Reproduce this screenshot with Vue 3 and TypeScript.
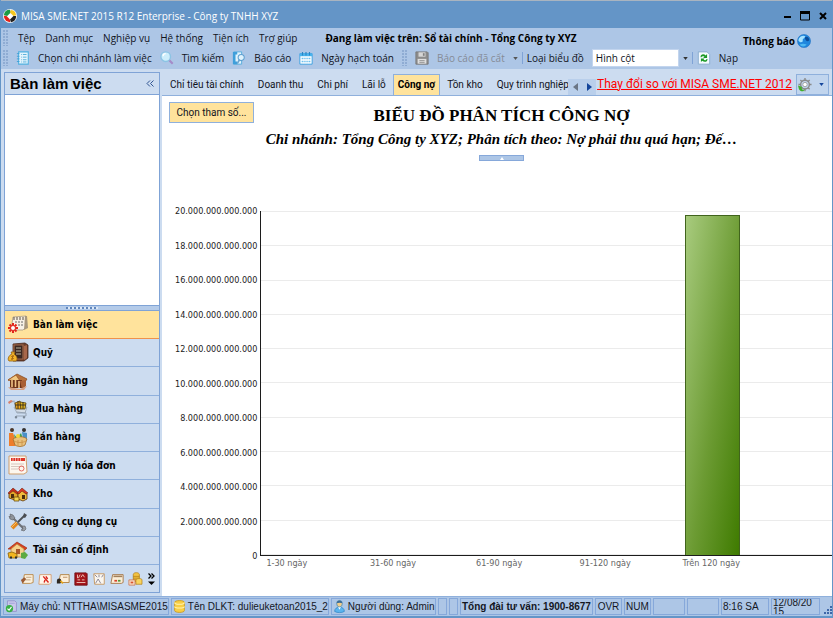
<script setup lang="ts">
import { ref } from 'vue'

interface Shape {
  d: string
  f?: string
  s?: string
  w?: number
}

const icons: Record<string, Shape[]> = {
  branch: [
    { d: 'M3 1h11v14H3z', f: '#e4f5fd', s: '#4fb0e0', w: 1.2 },
    { d: 'M1 3h3M1 6h3M1 9h3M1 12h3', s: '#3b9fd6', w: 1 },
    { d: 'M6 4h1M8 4h4M6 7h1M8 7h4M6 10h1M8 10h4M6 12.500h1M8 12.500h4', s: '#4aa8d8', w: 1 },
  ],
  search: [
    { d: 'M10 10l4.500 4.500', s: '#a58bc8', w: 2.5 },
    { d: 'M6.500 1a5.500 5.500 0 1 1 0 11a5.500 5.500 0 1 1 0-11z', f: '#cdeefb', s: '#8cc4e4', w: 1.6 },
    { d: 'M3.500 6a3 3 0 0 1 3-3', s: '#ffffff', w: 1.4 },
  ],
  report: [
    { d: 'M2 1h9v14H2z', f: '#e2f4fd', s: '#4fa9dc', w: 1 },
    { d: 'M1 1h5v3H4v8h2v3H1z', f: '#3f9fdb' },
    { d: 'M10.500 4a3.500 3.500 0 1 1 0 7a3.500 3.500 0 1 1 0-7z', f: '#dff2fc', s: '#5d9fd0', w: 1.2 },
    { d: 'M8.500 10L6 14.500', s: '#6aa3cf', w: 1.8 },
  ],
  calendar: [
    { d: 'M1 3h14v12H1z', f: '#ffffff', s: '#2f9be0', w: 1 },
    { d: 'M1 3h14v3H1z', f: '#49b4ee' },
    { d: 'M4 1v4M8 1v4M12 1v4', s: '#2b86c4', w: 1.3 },
    { d: 'M3 8.500h10M3 12h10', s: '#6cc0ef', w: 1.8 },
    { d: 'M5.500 7v7M8 7v7M10.500 7v7', s: '#ffffff', w: 0.8 },
  ],
  save: [
    { d: 'M1 1h13l1 1v13H1z', f: '#8c8c8c', s: '#777777', w: 1 },
    { d: 'M4 1.500h8v5H4z', f: '#d6d6d6' },
    { d: 'M9 2.500h2v3H9z', f: '#808080' },
    { d: 'M3 9h10v5.500H3z', f: '#dedede' },
    { d: 'M5 11h6M5 13h6', s: '#8f8f8f', w: 1 },
  ],
  reload: [
    { d: 'M1.500 1h10l3 3v11h-13z', f: '#f4faff', s: '#86aacb', w: 1 },
    { d: 'M4 7c0-4 4-4 6-2l1.500-1.500V8H7l1.500-1.500C7 5.500 5.500 6 5 7z', f: '#1c9a26' },
    { d: 'M12 9c0 4-4 4-6 2l-1.500 1.500V8.500h4L7.500 10c1.500 1 3 .5 3.500-1z', f: '#1c9a26' },
  ],
  globe: [
    { d: 'M8 0.500a7.500 7.500 0 1 1 0 15a7.500 7.500 0 1 1 0-15z', f: '#1f86dd', s: '#1a6ec0', w: 0.6 },
    { d: 'M1.500 7c1-5 6-6 8-4.500c-1 3-3 2.500-3 4.500c1 2-3 4-5 0z', f: '#a5e2ff' },
    { d: 'M3 12c3-1 5-1 8 0c-2 3-6 3-8 0z', f: '#4db8f2' },
    { d: 'M9 4c2-2 5 0 5 3c-2 3-5 0-5-3z', f: '#0b4d9a' },
  ],
  logo: [
    { d: 'M8 0a8 8 0 1 1 0 16a8 8 0 1 1 0-16z', f: '#f4f4f4' },
    { d: 'M8 1a7 7 0 0 0-7 6l4 1l4-4z', f: '#1b9b44' },
    { d: 'M9 1a7 7 0 0 1 6 6l-3 1l-4-4z', f: '#f6c71f' },
    { d: 'M15 8a7 7 0 0 1-6 7l-1-3l4-4z', f: '#202020' },
    { d: 'M1 8a7 7 0 0 0 7 7l0-3l-4-4z', f: '#e2231a' },
    { d: 'M8 5l3 3l-3 3l-3-3z', f: '#ffffff' },
  ],
  gear: [
    { d: 'M8 2.500a5 5 0 1 1 0 10a5 5 0 1 1 0-10z', s: '#8a8a8a', w: 1.6 },
    { d: 'M8 0v3M8 12v3M0.500 7.500h3M12.500 7.500h3M2.700 2.200l2 2M11.300 10.800l2 2M13.300 2.200l-2 2M4.700 10.800l-2 2', s: '#8a8a8a', w: 1.6 },
    { d: 'M8 5a2.500 2.500 0 1 1 0 5a2.500 2.500 0 1 1 0-5z', f: '#ffffff', s: '#9a9a9a', w: 1 },
    { d: 'M0 8.500l1 4c1 2 3 3 5 2.500l2-2c-2 1-4 0-4-2l1.500-.5z', f: '#3fae2a' },
  ],
  desk: [
    { d: 'M5 2l13-1v11l-3 3H3z', f: '#f7f1e6', s: '#a89a84', w: 0.8 },
    { d: 'M17 1l2 0l1 12l-4 2z', f: '#a8977c' },
    { d: 'M6 2v3M9 2v3M12 2v3M15 2v3', s: '#5b4e40', w: 1 },
    { d: 'M7 7h2M10 7h2M13 7h2M10 10h2M13 10h2', s: '#6a6a6a', w: 1 },
    { d: 'M5 8v10M0 13h10M1.500 9.500l7 7M8.500 9.500l-7 7', s: '#e2271c', w: 2 },
    { d: 'M5 10.500a2.500 2.500 0 1 1 0 5a2.500 2.500 0 1 1 0-5z', f: '#ffffff', s: '#e2271c', w: 1 },
  ],
  safe: [
    { d: 'M5 1l12-1l3 2v13l-4 3H5z', f: '#6b3f2c', s: '#4b2a1c', w: 0.8 },
    { d: 'M6 2h9v14H6z', f: '#3b2822', s: '#a2694a', w: 1.2 },
    { d: 'M8 5h5M8 8h5M8 11h5', s: '#b8b29c', w: 1.2 },
    { d: 'M16 3l3-1v13l-3 2z', f: '#a8674a' },
    { d: 'M3 9h4l-1 2c3 2 4 5 2 7H1c-2-2 0-6 3-7z', f: '#f3b52a', s: '#96620c', w: 0.8 },
    { d: 'M6 13H4c-1 1 2 2 1 3H3', s: '#8a4a08', w: 1 },
  ],
  bank: [
    { d: 'M0 8l9-6l10 5l-2 3z', f: '#b9733c', s: '#8b4d22', w: 0.8 },
    { d: 'M0 8l8-5l4 6z', f: '#f2c982', s: '#9c5b2a', w: 0.8 },
    { d: 'M2 8h12v8H2z', f: '#6d3319' },
    { d: 'M12 9l6-1v6l-4 3z', f: '#a85f35' },
    { d: 'M4 8v7M7.500 8v7M11 9v7', s: '#f0c286', w: 1.6 },
    { d: 'M0 15l12 2l7-3l-3 4H3z', f: '#d7a083' },
  ],
  cart: [
    { d: 'M1 3l5-2l3 11h9', s: '#a3b0c0', w: 1.2 },
    { d: 'M6 7h13l-2 6H9z', f: '#d5dde6', s: '#94a1b0', w: 0.8 },
    { d: 'M7 3l5-2l1 8H8z', f: '#f1a91d', s: '#54400c', w: 0.8 },
    { d: 'M12 2l6 1l-1 6h-4z', f: '#e9bb22', s: '#54400c', w: 0.8 },
    { d: 'M10 1v8M15 2v7M7 5h11', s: '#3f3520', w: 1 },
    { d: 'M9 12l9 1l0 3H8', s: '#97a4b4', w: 1 },
    { d: 'M8 16a1 1 0 1 1 0 2.500a1 1 0 1 1 0-2.500zM16 16a1 1 0 1 1 0 2.500a1 1 0 1 1 0-2.500z', f: '#7b8896' },
    { d: 'M0 2l3-2l2 1l-4 3z', f: '#d9806b' },
  ],
  sale: [
    { d: 'M1 5l4 0l3 8l-1 5H1z', f: '#ee7d2b' },
    { d: 'M4 0a2 2 0 1 1 0 4a2 2 0 1 1 0-4z', f: '#4b3628' },
    { d: 'M14 4l5 1v7l-4-1z', f: '#4a90c8' },
    { d: 'M16 0a2 2 0 1 1 0 4a2 2 0 1 1 0-4z', f: '#35302f' },
    { d: 'M6 6l3 4l4-5l2 6H7z', f: '#3fa04b' },
    { d: 'M5 11c4-3 11-3 14 0l-2 6c-3 2-7 2-10 0z', f: '#e8c07c', s: '#a5702b', w: 0.8 },
    { d: 'M6 13c4 2 8 2 12 0M10 12v6M14 12v6', s: '#c58a3f', w: 0.7 },
    { d: 'M10 6a2 2 0 1 1 0 4a2 2 0 1 1 0-4z', f: '#f4d837' },
  ],
  invoice: [
    { d: 'M1 0h17l1 16l-3 2H1z', f: '#fdf7ee', s: '#cf9f6f', w: 1 },
    { d: 'M3 3.500h14', s: '#df3326', w: 3 },
    { d: 'M5 2v3M7.500 2v3M10 2v3M12.500 2v3', s: '#fdf7ee', w: 0.6 },
    { d: 'M3 8h13M3 10.500h13M3 13h7', s: '#cbb9b3', w: 0.8 },
    { d: 'M13.500 10a2.500 2.500 0 1 1 0 5a2.500 2.500 0 1 1 0-5z', s: '#e4685f', w: 1 },
  ],
  stock: [
    { d: 'M1 9l4-4l5 4v6l-3 1l-6-2z', f: '#e1a72a', s: '#5e360a', w: 0.8 },
    { d: 'M0 9l5-5l6 5l-2 1l-4-3l-4 3z', f: '#c8301c', s: '#5e1a0a', w: 0.5 },
    { d: 'M10 10l4-4l5 4v5l-4 2l-5-2z', f: '#f0bd3c', s: '#5e360a', w: 0.8 },
    { d: 'M9 9l5-5l6 5l-2 1l-4-3l-3 3z', f: '#d83a24', s: '#5e1a0a', w: 0.5 },
    { d: 'M3 10h3v4H3zM14 11h3v4h-3z', f: '#4d2f0e' },
    { d: 'M6 13h5v4H6z', f: '#f6d750', s: '#6c4a0c', w: 0.8 },
  ],
  tools: [
    { d: 'M4 4l12 12', s: '#70747a', w: 2.2 },
    { d: 'M2 1l3 1l2 3l-2 2l-3-1l-1-3l2 1z', f: '#90959c', s: '#5a5d62', w: 0.6 },
    { d: 'M14 13l3 0l1 3l-2 2l-3-1l2-1z', f: '#9aa0a8', s: '#5a5d62', w: 0.6 },
    { d: 'M17 2L10 9', s: '#4d5055', w: 1.8 },
    { d: 'M16 0l3 2l-2 3l-2-1z', f: '#4a4d52' },
    { d: 'M9 10l-5 5', s: '#e2871e', w: 4 },
    { d: 'M9 9l-5 5', s: '#f6bd62', w: 1 },
  ],
  asset: [
    { d: 'M0 8l9-7l10 6l-2 2z', f: '#d9401f', s: '#97260c', w: 0.6 },
    { d: 'M3 8l6-5l7 5v8H3z', f: '#f6d28c', s: '#b78943', w: 0.8 },
    { d: 'M8 8h4v5H8z', f: '#a9572a' },
    { d: 'M0 12l4-1l5 2v4H1z', f: '#f3b61e', s: '#8c6209', w: 0.8 },
    { d: 'M2 16.500h2M7 16.500h2', s: '#2c2c2c', w: 2 },
    { d: 'M13 12l4-1l3 3l-3 4l-4-1z', f: '#5daa42' },
  ],
  mini1: [
    { d: 'M5 3h10v9l-3 1H3z', f: '#fbf1de', s: '#b8833f', w: 1 },
    { d: 'M7 6h6M6 9h6', s: '#bd9c77', w: 1 },
    { d: 'M1 9l4-3l2 2l-4 5z', f: '#9c5b33' },
  ],
  mini2: [
    { d: 'M2 3h13v9l-2 2H1z', f: '#fff6ea', s: '#d29a6b', w: 1 },
    { d: 'M6 5l6 7M9 5l2 3M8 9l-1 3', s: '#d9231b', w: 1.6 },
  ],
  mini3: [
    { d: 'M5 3h10v9H3z', f: '#fdefd9', s: '#b07e3a', w: 1 },
    { d: 'M1 10a2 2 0 1 1 5 0l-1 3H1z', f: '#2c2722' },
    { d: 'M5 10l3 3', s: '#e6a519', w: 2 },
    { d: 'M8 6h5', s: '#b7875a', w: 1 },
  ],
  mini4: [
    { d: 'M1 1h13l1 1v13H1z', f: '#a5161b', s: '#6f0c10', w: 1 },
    { d: 'M4 3v4M7 3l-2 4M8 6l2-3l2 3M4 9h3M9 9h3M3 12h10', s: '#f1cfc4', w: 1 },
  ],
  mini5: [
    { d: 'M2 2h12v12H3z', f: '#faf6ef', s: '#c5955b', w: 1 },
    { d: 'M3 3l3 3M8 3v3M13 3l-2 3M4 13l3-5l3 5', s: '#807c8e', w: 1 },
  ],
  mini6: [
    { d: 'M3 3h12v9l-2 1H1z', f: '#fbeed8', s: '#a27242', w: 1 },
    { d: 'M4 5h10', s: '#a2805c', w: 1.8 },
    { d: 'M5 10h3', s: '#d8402c', w: 2 },
    { d: 'M9 10h3', s: '#54953c', w: 2 },
  ],
  mini7: [
    { d: 'M6 3c0-3 7-3 7 0v8H6z', f: '#f3c342', s: '#b27c11', w: 0.8 },
    { d: 'M6 5h7M6 7h7M6 9h7', s: '#b27c11', w: 0.8 },
    { d: 'M9 9c1-2 7-2 7 0v5H9z', f: '#f8d45f', s: '#b27c11', w: 0.8 },
    { d: 'M1 9h7v6H1z', f: '#f7dcc6', s: '#c76a45', w: 0.8 },
    { d: 'M3 11h3v2H3z', f: '#d9542f' },
  ],
  server: [
    { d: 'M3 1h9l2 2v11H3z', f: '#c9c8ea', s: '#8e8bc8', w: 1 },
    { d: 'M5 4h7', s: '#9d99d6', w: 1 },
    { d: 'M5.500 6a4.500 4.500 0 1 1 0 9a4.500 4.500 0 1 1 0-9z', f: '#38b045' },
    { d: 'M3 10.500l2 2l3-4', s: '#ffffff', w: 1.3 },
  ],
  database: [
    { d: 'M2 3c0-3 12-3 12 0v10c0 3-12 3-12 0z', f: '#f8cf45', s: '#c9971a', w: 1 },
    { d: 'M2 3c0 3 12 3 12 0M2 8c0 2.500 12 2.500 12 0', s: '#fff3b0', w: 1.4 },
  ],
  user: [
    { d: 'M2 14c0-7 12-7 12 0c-3 2-9 2-12 0z', f: '#5bb4ee', s: '#2b7fbf', w: 0.8 },
    { d: 'M6 8l2 4l2-4z', f: '#ffffff' },
    { d: 'M8 0.500a3.500 4 0 1 1 0 8a3.500 4 0 1 1 0-8z', f: '#f3cd8a', s: '#2f83c0', w: 0.8 },
    { d: 'M4.500 4c0-4.500 7-4.500 7 0c-2-1-5-1-7 0z', f: '#3a6b98' },
  ],
}

const menus = ['Tệp', 'Danh mục', 'Nghiệp vụ', 'Hệ thống', 'Tiện ích', 'Trợ giúp']

const tools = [
  { icon: 'branch', label: 'Chọn chi nhánh làm việc' },
  { icon: 'search', label: 'Tìm kiếm' },
  { icon: 'report', label: 'Báo cáo' },
  { icon: 'calendar', label: 'Ngày hạch toán' },
]

const tabs = ['Chỉ tiêu tài chính', 'Doanh thu', 'Chi phí', 'Lãi lỗ', 'Công nợ', 'Tồn kho', 'Quy trình nghiệp vụ']
const activeTab = ref('Công nợ')

const modules = [
  { icon: 'desk', label: 'Bàn làm việc' },
  { icon: 'safe', label: 'Quỹ' },
  { icon: 'bank', label: 'Ngân hàng' },
  { icon: 'cart', label: 'Mua hàng' },
  { icon: 'sale', label: 'Bán hàng' },
  { icon: 'invoice', label: 'Quản lý hóa đơn' },
  { icon: 'stock', label: 'Kho' },
  { icon: 'tools', label: 'Công cụ dụng cụ' },
  { icon: 'asset', label: 'Tài sản cố định' },
]
const activeModule = ref('Bàn làm việc')
const shortcuts = ['mini1', 'mini2', 'mini3', 'mini4', 'mini5', 'mini6', 'mini7']

const chartType = ref('Hình cột')

const axisMax = 20
const ticks = Array.from({ length: 11 }, (_, i) => {
  const value = axisMax - i * 2
  return value === 0 ? '0' : `${value}.000.000.000.000`
})
const series = [
  { label: '1-30 ngày', value: 0 },
  { label: '31-60 ngày', value: 0 },
  { label: '61-90 ngày', value: 0 },
  { label: '91-120 ngày', value: 0 },
  { label: 'Trên 120 ngày', value: 19.75 },
]
</script>

<template>
  <div class="window">
    <header class="titlebar">
      <svg class="ic small" viewBox="0 0 16 16"><path v-for="(p, i) in icons.logo" :key="i" :d="p.d" :fill="p.f || 'none'" :stroke="p.s" :stroke-width="p.w" /></svg>
      <span class="caption">MISA SME.NET 2015 R12 Enterprise - Công ty TNHH XYZ</span>
      <div class="winbtns">
        <button aria-label="Thu nhỏ"><svg viewBox="0 0 10 10"><path d="M2 5h7v2H2z" fill="#000" /></svg></button>
        <button aria-label="Phóng to"><svg viewBox="0 0 10 10"><path d="M.5 1v8h9V1z" fill="none" stroke="#000" /><path d="M0 0h10v3H0z" fill="#000" /></svg></button>
        <button aria-label="Đóng"><svg viewBox="0 0 10 10"><path d="M2 2l6 6M8 2l-6 6" stroke="#000" stroke-width="2" /></svg></button>
      </div>
    </header>

    <div class="bars">
      <div class="rows">
        <nav class="row menu">
          <i class="grip"></i>
          <button v-for="m in menus" :key="m">{{ m }}</button>
          <strong class="working">Đang làm việc trên: Sổ tài chính - Tổng Công ty XYZ</strong>
        </nav>
        <div class="row tools">
          <i class="grip"></i>
          <button v-for="t in tools" :key="t.icon" class="tool">
            <svg class="ic small" viewBox="0 0 16 16"><path v-for="(p, i) in icons[t.icon]" :key="i" :d="p.d" :fill="p.f || 'none'" :stroke="p.s" :stroke-width="p.w" /></svg>
            <span>{{ t.label }}</span>
          </button>
          <i class="grip"></i>
          <button class="tool muted" disabled>
            <svg class="ic small" viewBox="0 0 16 16"><path v-for="(p, i) in icons.save" :key="i" :d="p.d" :fill="p.f || 'none'" :stroke="p.s" :stroke-width="p.w" /></svg>
            <span>Báo cáo đã cất</span>
            <svg class="caret" viewBox="0 0 6 4"><path d="M0 0h6L3 4z" fill="#555" /></svg>
          </button>
          <i class="sep"></i>
          <label for="chart-type">Loại biểu đồ</label>
          <div class="combo">
            <select id="chart-type" v-model="chartType">
              <option>Hình cột</option>
              <option>Hình tròn</option>
            </select>
            <svg class="caret" viewBox="0 0 6 4"><path d="M0 0h6L3 4z" fill="#333" /></svg>
          </div>
          <i class="sep"></i>
          <button class="tool">
            <svg class="ic small" viewBox="0 0 16 16"><path v-for="(p, i) in icons.reload" :key="i" :d="p.d" :fill="p.f || 'none'" :stroke="p.s" :stroke-width="p.w" /></svg>
            <span>Nạp</span>
          </button>
        </div>
      </div>
      <button class="notice">
        <span>Thông báo</span>
        <svg class="ic small" viewBox="0 0 16 16"><path v-for="(p, i) in icons.globe" :key="i" :d="p.d" :fill="p.f || 'none'" :stroke="p.s" :stroke-width="p.w" /></svg>
      </button>
    </div>

    <div class="body">
      <aside class="side">
        <div class="sidehead">
          <h2>Bàn làm việc</h2>
          <button aria-label="Thu gọn"><svg viewBox="0 0 8 7"><path d="M4 .5L1 3.500l3 3M7.500 .5l-3 3l3 3" fill="none" stroke="#2f5390" /></svg></button>
        </div>
        <div class="sidepane"></div>
        <div class="splitter"><i></i></div>
        <nav class="modules">
          <button v-for="m in modules" :key="m.icon" class="module" :class="{ on: m.label === activeModule }" @click="activeModule = m.label">
            <svg class="ic big" viewBox="0 0 20 19"><path v-for="(p, i) in icons[m.icon]" :key="i" :d="p.d" :fill="p.f || 'none'" :stroke="p.s" :stroke-width="p.w" /></svg>
            <span>{{ m.label }}</span>
          </button>
        </nav>
        <div class="shortcuts">
          <button v-for="s in shortcuts" :key="s" :aria-label="s">
            <svg class="ic small" viewBox="0 0 16 16"><path v-for="(p, i) in icons[s]" :key="i" :d="p.d" :fill="p.f || 'none'" :stroke="p.s" :stroke-width="p.w" /></svg>
          </button>
          <button class="more" aria-label="Thêm">
            <svg viewBox="0 0 7 12"><path d="M.5 .5L3 3L.5 5.500M3.500 .5L6 3L3.500 5.500" fill="none" stroke="#000" stroke-width="1.300" /><path d="M0 8.500h7L3.500 12z" fill="#000" /></svg>
          </button>
        </div>
      </aside>

      <main class="main">
        <div class="tabs">
          <div class="tablist">
            <button v-for="t in tabs" :key="t" class="tab" :class="{ on: t === activeTab }" @click="activeTab = t">{{ t }}</button>
          </div>
          <div class="scroll">
            <button aria-label="Trước"><svg viewBox="0 0 5 8"><path d="M5 0v8L0 4z" fill="#6b7686" /></svg></button>
            <button aria-label="Sau"><svg viewBox="0 0 5 8"><path d="M0 0v8l5-4z" fill="#14459b" /></svg></button>
          </div>
          <a href="#" class="changes">Thay đổi so với MISA SME.NET 2012</a>
          <button class="settings" aria-label="Tùy chọn">
            <svg class="ic small" viewBox="0 0 16 16"><path v-for="(p, i) in icons.gear" :key="i" :d="p.d" :fill="p.f || 'none'" :stroke="p.s" :stroke-width="p.w" /></svg>
            <svg class="caret" viewBox="0 0 6 4"><path d="M0 0h6L3 4z" fill="#14459b" /></svg>
          </button>
        </div>

        <section class="report">
          <div class="heading">
            <button class="param">Chọn tham số...</button>
            <div class="titles">
              <h1>BIỂU ĐỒ PHÂN TÍCH CÔNG NỢ</h1>
              <p>Chi nhánh: Tổng Công ty XYZ; Phân tích theo: Nợ phải thu quá hạn; Đế…</p>
              <button class="fold" aria-label="Thu gọn tiêu đề"><svg viewBox="0 0 4 3"><path d="M0 3h4L2 0z" fill="#fff" /></svg></button>
            </div>
          </div>
          <div class="chart">
            <div class="yaxis"><span v-for="t in ticks" :key="t">{{ t }}</span></div>
            <div class="plot">
              <div class="grid"><i v-for="t in ticks" :key="t"></i></div>
              <div class="slots">
                <div v-for="s in series" :key="s.label" class="slot">
                  <div v-if="s.value" class="bar" :style="{ height: (s.value / axisMax) * 100 + '%' }"></div>
                </div>
              </div>
            </div>
            <div class="xaxis"><div v-for="s in series" :key="s.label"><span>{{ s.label }}</span></div></div>
          </div>
        </section>
      </main>
    </div>

    <footer class="status">
      <div class="cell host">
        <svg class="ic tinyic" viewBox="0 0 16 16"><path v-for="(p, i) in icons.server" :key="i" :d="p.d" :fill="p.f || 'none'" :stroke="p.s" :stroke-width="p.w" /></svg>
        <span>Máy chủ: NTTHA\MISASME2015</span>
      </div>
      <div class="cell db">
        <svg class="ic tinyic" viewBox="0 0 16 16"><path v-for="(p, i) in icons.database" :key="i" :d="p.d" :fill="p.f || 'none'" :stroke="p.s" :stroke-width="p.w" /></svg>
        <span>Tên DLKT: dulieuketoan2015_2</span>
      </div>
      <div class="cell who">
        <svg class="ic tinyic" viewBox="0 0 16 16"><path v-for="(p, i) in icons.user" :key="i" :d="p.d" :fill="p.f || 'none'" :stroke="p.s" :stroke-width="p.w" /></svg>
        <span>Người dùng: Admin</span>
      </div>
      <div class="cell tiny"></div>
      <div class="cell tiny"></div>
      <div class="cell hotline">Tổng đài tư vấn: 1900-8677</div>
      <div class="cell key">OVR</div>
      <div class="cell key">NUM</div>
      <div class="cell blank"></div>
      <div class="cell blank"></div>
      <div class="cell time">8:16 SA</div>
      <div class="cell date">12/08/20<br />15</div>
      <svg class="resize" viewBox="0 0 10 10"><path d="M8 1h2v2H8zM5 4h2v2H5zM8 4h2v2H8zM2 7h2v2H2zM5 7h2v2H5zM8 7h2v2H8z" fill="#3f67a8" /></svg>
    </footer>
  </div>
</template>

<style>
body {
  margin: 0;
}
</style>

<style scoped>
* {
  box-sizing: border-box;
}
button {
  appearance: none;
  border: 0;
  padding: 0;
  background: none;
  color: inherit;
  font: inherit;
  white-space: nowrap;
}
svg {
  display: block;
  flex: none;
}
.ic {
  overflow: visible;
}
.small {
  width: 14px;
  height: 14px;
}
.tinyic {
  width: 13px;
  height: 13px;
}
.big {
  width: 20px;
  height: 19px;
}
.caret {
  width: 5px;
  height: 3px;
}
.window {
  display: flex;
  flex-direction: column;
  min-height: 100vh;
  border: solid #6495c7;
  border-width: 0 1px 2px;
  background: #ccdcf0;
  color: #10131c;
  font: 10px/14px "Open Sans", "Noto Sans", sans-serif;
}
.titlebar {
  display: flex;
  align-items: center;
  gap: 4px;
  height: 28px;
  padding: 2px 4px 0 2px;
  border-top: 1px solid #a9b4c0;
  background: #6495c7;
}
.caption {
  flex: 1;
  color: #fff;
}
.winbtns {
  display: flex;
  gap: 8px;
}
.winbtns svg {
  width: 10px;
  height: 10px;
}
.bars {
  display: flex;
  justify-content: space-between;
  height: 41px;
  padding: 0 21px 0 2px;
  background: #adc6e6;
}
.row {
  display: flex;
  align-items: center;
  height: 20px;
  white-space: nowrap;
}
.grip {
  flex: none;
  width: 5px;
  height: 16px;
  background: radial-gradient(circle at 1px 1px, #8facd3 1px, transparent 1px) 0 0 / 3px 3px;
}
.menu {
  gap: 10px;
}
.working {
  margin-left: 18px;
  color: #000;
  font-weight: 700;
}
.tools {
  gap: 8px;
}
.tool {
  display: flex;
  align-items: center;
  gap: 8px;
}
.muted {
  color: #858b96;
}
.sep {
  width: 1px;
  height: 12px;
  margin: 0 -4px;
  background: #7fa3d6;
}
.combo {
  display: flex;
  align-items: center;
  gap: 4px;
}
select {
  appearance: none;
  width: 87px;
  height: 18px;
  padding: 0 3px;
  border: 1px solid #c3d5ee;
  border-radius: 0;
  background: #fff;
  color: #10131c;
  font: inherit;
}
.notice {
  display: flex;
  align-items: center;
  align-self: flex-start;
  gap: 2px;
  height: 26px;
  color: #000;
  font-weight: 700;
}
.body {
  display: flex;
  flex: 1;
  gap: 2px;
  padding: 3px 0 0 3px;
}
.side {
  display: flex;
  flex: none;
  flex-direction: column;
  width: 156px;
  margin-bottom: 3px;
  border: 1px solid #7fa3d6;
}
.sidehead {
  display: flex;
  align-items: center;
  justify-content: space-between;
  height: 22px;
  padding: 0 5px;
  border-bottom: 1px solid #7fa3d6;
}
.sidehead h2 {
  margin: 0;
  color: #000;
  font: bold 15px/20px "Liberation Sans", Arial, sans-serif;
}
.sidehead svg {
  width: 8px;
  height: 7px;
}
.sidepane {
  flex: 1;
  background: #fff;
}
.splitter {
  display: flex;
  align-items: center;
  justify-content: center;
  height: 6px;
  border: solid #7fa3d6;
  border-width: 1px 0;
  background: #b4cbe9;
}
.splitter i {
  width: 32px;
  height: 2px;
  background: repeating-linear-gradient(90deg, #5f86bd 0 2px, #dce8f7 2px 4px);
}
.modules {
  display: grid;
  grid-auto-rows: 1fr;
  height: 254px;
}
.module {
  display: flex;
  align-items: center;
  gap: 5px;
  padding-left: 3px;
  border-bottom: 1px solid #8fb0dc;
  color: #000;
  font: bold 10px/14px "DejaVu Sans Condensed", "DejaVu Sans", sans-serif;
  font-stretch: condensed;
}
.module.on {
  border-bottom-color: #f0924b;
  background: #ffe39c;
}
.shortcuts {
  display: flex;
  align-items: center;
  justify-content: flex-end;
  gap: 4px;
  height: 27px;
  padding-right: 4px;
}
.more {
  margin-left: 2px;
}
.more svg {
  width: 7px;
  height: 12px;
}
.main {
  display: flex;
  flex: 1;
  flex-direction: column;
  min-width: 0;
}
.tabs {
  display: flex;
  align-items: center;
  height: 24px;
  border-bottom: 1px solid #8fb0dc;
  font-family: Roboto, "Noto Sans", sans-serif;
}
.tablist {
  display: flex;
  flex: 1;
  align-self: stretch;
  align-items: flex-end;
  min-width: 0;
  padding-left: 1px;
  overflow: hidden;
}
.tab {
  height: 21px;
  padding: 0 7px;
}
.tab.on {
  padding: 0 4px;
  border: 1px solid #8fb0dc;
  border-bottom: 0;
  background: #ffe39c;
  color: #000;
  font-weight: 700;
}
.scroll {
  display: flex;
  align-items: center;
  align-self: flex-end;
  justify-content: space-around;
  width: 28px;
  height: 16px;
  background: #b9cfeb;
}
.scroll svg {
  width: 5px;
  height: 8px;
}
.changes {
  margin: 0 4px 0 1px;
  color: #f00;
  font-size: 12px;
  line-height: 16px;
  white-space: nowrap;
}
.settings {
  display: flex;
  align-items: center;
  align-self: flex-end;
  gap: 7px;
  height: 21px;
  margin-right: 3px;
  padding: 0 4px 0 1px;
  border: 1px solid #8fb0dc;
  background: #c1d5ee;
}
.report {
  display: flex;
  flex: 1;
  flex-direction: column;
  padding: 6px 0 26px 7px;
  background: #fff;
}
.heading {
  display: flex;
  align-items: flex-start;
}
.param {
  flex: none;
  width: 85px;
  height: 21px;
  border: 1px solid #8fb0dc;
  background: #ffe39c;
  font-family: Roboto, "Noto Sans", sans-serif;
}
.titles {
  display: flex;
  flex: 1;
  flex-direction: column;
  align-items: center;
  padding-right: 83px;
  color: #000;
  white-space: nowrap;
}
h1 {
  margin: 4px 0 0;
  font: bold 17px/20px "Liberation Serif", "Times New Roman", serif;
}
.titles p {
  margin: 3px 0 0;
  font: italic bold 15px/20px "Liberation Serif", "Times New Roman", serif;
}
.fold {
  display: flex;
  align-items: center;
  justify-content: center;
  width: 45px;
  height: 6px;
  margin-top: 6px;
  border: 1px solid #86a8da;
  background: #adc6e6;
}
.fold svg {
  width: 4px;
  height: 3px;
}
.chart {
  display: grid;
  flex: 1;
  grid-template: minmax(200px, 1fr) 14px / auto 1fr;
  column-gap: 3px;
  margin-top: 50px;
  padding-left: 6px;
  font: 9px/14px "DejaVu Sans Condensed", "DejaVu Sans", sans-serif;
  font-stretch: condensed;
}
.yaxis {
  display: flex;
  flex-direction: column;
  justify-content: space-between;
  margin: -7px 0;
  color: #222;
  text-align: right;
}
.plot,
.grid {
  display: grid;
}
.plot {
  border: solid #1c1c1c;
  border-width: 0 0 1px 1px;
}
.grid,
.slots {
  grid-area: 1 / 1;
}
.grid {
  align-content: space-between;
}
.grid i {
  height: 1px;
  background: #ebebeb;
}
.slots,
.xaxis {
  display: grid;
  grid-template-columns: repeat(5, 106fr) 41fr;
}
.slot {
  display: flex;
  align-items: flex-end;
}
.bar {
  width: 55px;
  border: 1px solid #41641d;
  border-bottom: 0;
  background: linear-gradient(to bottom right, #a8cb7e, #6c9b33 55%, #3f7b00);
}
.xaxis {
  grid-column: 2;
  color: #666;
  white-space: nowrap;
}
.xaxis div {
  display: flex;
  justify-content: center;
  width: 53px;
}
.status {
  display: flex;
  gap: 2px;
  height: 20px;
  padding: 1px 0 1px 2px;
  border-top: 1px solid #8fb0dc;
  background: #adc6e6;
  color: #14171f;
  font: 10px/16px "Liberation Sans", Arial, sans-serif;
}
.cell {
  display: flex;
  align-items: center;
  gap: 2px;
  padding: 0 1px;
  border: 1px solid #86a8da;
  overflow: hidden;
  white-space: nowrap;
}
.host {
  flex: 168 1 0;
}
.db {
  flex: 160 1 0;
}
.who {
  flex: 105 1 0;
}
.tiny {
  flex: none;
  width: 9px;
}
.hotline {
  flex: 134 1 0;
  font-weight: 700;
}
.key {
  flex: none;
  justify-content: center;
  width: 27px;
}
.blank {
  flex: none;
  width: 32px;
}
.time {
  flex: none;
  width: 48px;
}
.date {
  flex: none;
  width: 49px;
  line-height: 9px;
}
.resize {
  align-self: flex-end;
  width: 10px;
  height: 10px;
}
</style>
